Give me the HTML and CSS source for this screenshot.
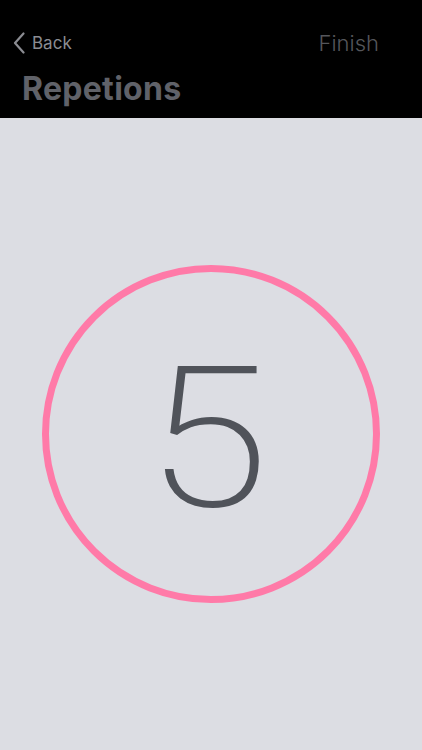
FILE: index.html
```html
<!DOCTYPE html>
<html lang="en">
<head>
  <meta charset="UTF-8" />
  <meta name="viewport" content="width=device-width, initial-scale=1.0"/>
  <title>Repetions</title>
  <link rel="stylesheet" href="styles.css">
</head>
<body>
  <header class="top-bar">
    <div class="nav-row">
      <a class="back" href="#">
        <svg class="chevron" width="12" height="22" viewBox="0 0 12 22">
          <path d="M10.5 1.5 L2 11 L10.5 20.5" fill="none" stroke="#8b8c92" stroke-width="2.2" stroke-linecap="round" stroke-linejoin="round"/>
        </svg>
        <span>Back</span>
      </a>
      <a class="finish" href="#">Finish</a>
    </div>
    <h1>Repetions</h1>
  </header>

  <main class="counter-area">
    <div class="ring">
      <span class="count">5</span>
    </div>
  </main>
</body>
</html>
```

FILE: styles.css
```css
html, body {
  margin: 0;
  height: 100%;
}
body {
  background: #dcdde3;
  font-family: Inter, "Open Sans", "Liberation Sans", sans-serif;
}
.top-bar {
  background: #000;
  height: 118px;
  box-sizing: border-box;
  padding: 30px 0 0 0;
}
.nav-row {
  display: flex;
  justify-content: space-between;
  align-items: center;
  height: 26px;
  padding: 0 43px 0 13px;
}
.back {
  display: flex;
  align-items: center;
  gap: 7px;
  color: #8b8c92;
  text-decoration: none;
  font-size: 17px;
}
.chevron {
  display: block;
}
.finish {
  color: #55565b;
  text-decoration: none;
  font-size: 22px;
  font-weight: 300;
}
h1 {
  margin: 13px 0 0 22px;
  font-size: 32px;
  font-weight: 700;
  color: #606269;
  letter-spacing: 0.3px;
}
.counter-area {
  display: flex;
  justify-content: center;
  padding-top: 147px;
}
.ring {
  width: 338px;
  height: 338px;
  box-sizing: border-box;
  border: 7px solid #ff7aa8;
  border-radius: 50%;
  display: flex;
  align-items: center;
  justify-content: center;
}
.count {
  font-family: Roboto, Inter, sans-serif;
  font-size: 197px;
  font-weight: 200;
  color: #50535a;
  line-height: 1;
  margin: 8px 0 0 -7px;
  display: inline-block;
  transform: scaleX(1.14);
}
```
